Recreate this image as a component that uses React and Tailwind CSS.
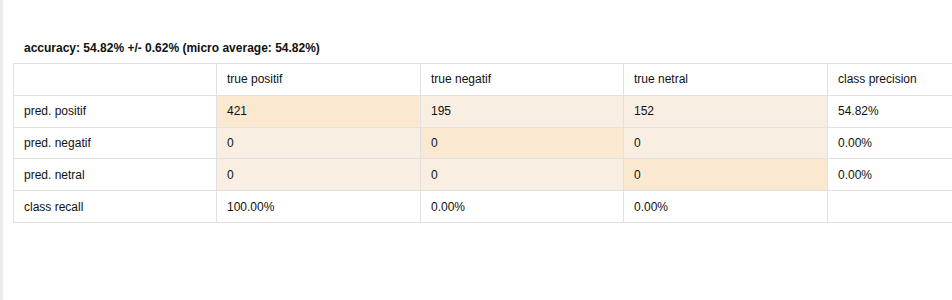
export default function App() {
  const dark = "bg-[#fae8d0]";
  const light = "bg-[#f8eee2]";
  const rows = [
    { label: "pred. positif", cells: [["421", dark], ["195", light], ["152", light]], prec: "54.82%" },
    { label: "pred. negatif", cells: [["0", light], ["0", dark], ["0", light]], prec: "0.00%" },
    { label: "pred. netral", cells: [["0", light], ["0", light], ["0", dark]], prec: "0.00%" },
  ];
  const td = "border border-[#e1e1e1] h-[31.8px] px-[10px] text-left font-normal align-middle";
  return (
    <div className="flex w-[952px] h-[300px] overflow-hidden bg-white text-[12px] text-[#111]" style={{ fontFamily: '"Liberation Sans", Arial, sans-serif' }}>
      <div className="w-[3px] shrink-0 bg-[#ebebeb]" />
      <div className="pt-[41px] pl-[10px] shrink-0">
        <div className="font-bold pl-[11px] h-[22px] leading-[14px]">accuracy: 54.82% +/- 0.62% (micro average: 54.82%)</div>
        <table className="border-collapse table-fixed w-[1020px]">
          <colgroup>
            <col className="w-[203px]" />
            <col className="w-[204px]" />
            <col className="w-[203px]" />
            <col className="w-[204px]" />
            <col className="w-[206px]" />
          </colgroup>
          <tbody>
            <tr>
              <td className={td}></td>
              <td className={td}>true positif</td>
              <td className={td}>true negatif</td>
              <td className={td}>true netral</td>
              <td className={td}>class precision</td>
            </tr>
            {rows.map((r) => (
              <tr key={r.label}>
                <td className={td}>{r.label}</td>
                {r.cells.map(([v, c], i) => (
                  <td key={i} className={`${td} ${c}`}>{v}</td>
                ))}
                <td className={td}>{r.prec}</td>
              </tr>
            ))}
            <tr>
              <td className={td}>class recall</td>
              <td className={td}>100.00%</td>
              <td className={td}>0.00%</td>
              <td className={td}>0.00%</td>
              <td className={td}></td>
            </tr>
          </tbody>
        </table>
      </div>
    </div>
  );
}
